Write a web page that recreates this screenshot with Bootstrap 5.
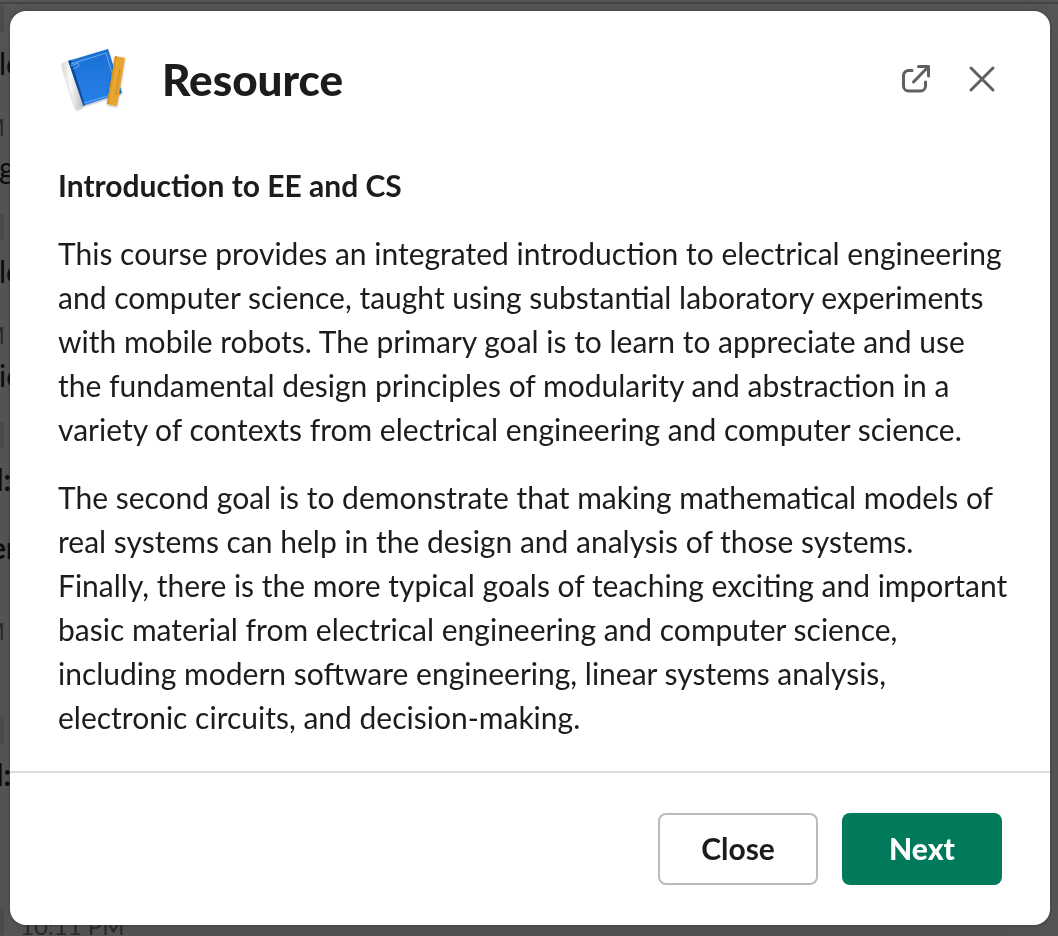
<!DOCTYPE html>
<html lang="en">
<head>
<meta charset="utf-8">
<meta name="viewport" content="width=device-width, initial-scale=1">
<title>Resource</title>
<link href="https://cdn.jsdelivr.net/npm/bootstrap@5.3.0/dist/css/bootstrap.min.css" rel="stylesheet">
<style>
  body { font-family: Lato, sans-serif; color: #1d1c1d; background: #575757; height: 100vh; overflow: hidden; }
  /* dimmed channel behind the dialog */
  .channel { font-size: 30px; line-height: 44px; color: #0c0c0c; border-top: 2px solid #444; margin-top: 2px; white-space: nowrap; }
  .chip { width: 4px; height: 28px; background: #4c4c4c; border-radius: 0 4px 4px 0; }
  .message { text-indent: -1px; }
  .message-bold { text-indent: -4px; font-weight: 700; }
  .sender { text-indent: -10px; font-weight: 700; }
  .stamp { font-size: 24px; line-height: 28px; color: #2b2b2b; }
  .stamp-end { width: 5px; display: flex; justify-content: flex-end; }
  .g1 { margin-top: 1px; } .g4 { margin-top: 4px; } .g8 { margin-top: 8px; } .g24 { margin-top: 24px; }
  .g28 { margin-top: 28px; } .g48 { margin-top: 48px; } .g71 { margin-top: 71px; } .g112 { margin-top: 112px; }
  /* dialog */
  .sheet-frame { padding: 11px 8px 11px 10px; }
  .sheet { border: 0; border-radius: 16px; box-shadow: 0 0 0 2px rgba(29,28,29,.13), 0 8px 32px rgba(0,0,0,.12); color: #1d1c1d; }
  .sheet-head { padding: 36px 48px 0; height: 132px; }
  .sheet-title { font-size: 44px; line-height: 64px; font-weight: 900; margin-left: 32px; }
  .tool { width: 66px; height: 64px; color: #616061; border: 0; padding: 0; background: none; display: flex; align-items: center; justify-content: center; }
  .tools { margin-right: -13px; }
  .sheet-copy { padding: 20px 40px 16px 48px; font-size: 30px; line-height: 44px; }
  .sheet-copy h2 { font-size: 30px; line-height: 44px; font-weight: 700; margin: 0 0 24px; }
  .sheet-copy p { margin: 0 0 24px; }
  .sheet-copy p:last-child { margin: 0; }
  .sheet-foot { border-top: 2px solid #ddd; padding: 40px 48px; gap: 24px; }
  .action { width: 160px; height: 72px; border-radius: 8px; font-size: 30px; line-height: 44px; font-weight: 700; padding: 0 0 2px; }
  .action-plain, .action-plain:hover { background: #fff; border: 2px solid #bbb; color: #1d1c1d; }
  .action-main, .action-main:hover { background: #007a5a; border: 0; color: #fff; font-weight: 900; }
</style>
</head>
<body>
<div class="channel" aria-hidden="true">
  <div class="chip g1"></div>
  <div class="message g8">le</div>
  <div class="stamp stamp-end g28">M</div>
  <div class="message g4">g</div>
  <div class="chip g24"></div>
  <div class="message g8">le</div>
  <div class="stamp stamp-end g28">M</div>
  <div class="message g4">ic</div>
  <div class="chip g24"></div>
  <div class="message-bold g8">l:</div>
  <div class="sender g24">er</div>
  <div class="stamp stamp-end g48">M</div>
  <div class="chip g71"></div>
  <div class="message-bold g8">l:</div>
  <div class="g112 d-flex">
    <div class="chip flex-shrink-0"></div>
    <div class="stamp ms-3 pt-1">10:11 PM</div>
  </div>
</div>

<div class="modal d-block overflow-hidden sheet-frame" role="dialog" aria-labelledby="sheet-title">
  <div class="modal-content sheet h-100">
    <header class="sheet-head d-flex align-items-start">
      <svg width="72" height="72" viewBox="0 0 72 72" aria-hidden="true">
        <defs>
          <linearGradient id="cover" x1="0" y1="0" x2="0" y2="1"><stop offset="0" stop-color="#1d6fd2"/><stop offset="1" stop-color="#2480ea"/></linearGradient>
          <linearGradient id="spine" x1="0" y1="0" x2="1" y2="0"><stop offset="0" stop-color="#d9d9d9"/><stop offset=".4" stop-color="#fafafa"/><stop offset="1" stop-color="#bcbcbc"/></linearGradient>
          <filter id="soft" x="-20%" y="-20%" width="140%" height="140%"><feDropShadow dx="0" dy="1" stdDeviation="1" flood-opacity=".35"/></filter>
        </defs>
        <g filter="url(#soft)">
          <path d="M10 14 50 2 64 46 24 59Z" fill="url(#cover)"/>
          <path d="M10 14 13 13 27 58 24 59Z" fill="#0b4c9f"/>
          <path d="M4 18Q4 15 10 14L25 58Q24 61 18 62Z" fill="url(#spine)"/>
          <path d="M13 17 48 6 60 46 26 56" fill="none" stroke="#6fabf2" stroke-width="1"/>
          <path d="M13 19 20 16 21 19 15 22" fill="none" stroke="#6fabf2" stroke-width="1"/>
        </g>
        <g filter="url(#soft)">
          <path d="M57 9 67 11 59 59 49 57Z" fill="#e8a52e"/>
          <path d="M57 9 59 9 51 57 49 57Z" fill="#d89624"/>
          <path d="M59 15l-6 39" stroke="#efb042" stroke-width="2" stroke-dasharray="1 2"/>
          <path d="M62 22l-4 26" stroke="#a87018" stroke-width="1" stroke-dasharray="1 1"/>
        </g>
      </svg>
      <h1 class="sheet-title mb-0" id="sheet-title">Resource</h1>
      <div class="d-flex ms-auto tools">
        <button type="button" class="tool" aria-label="Open in new window">
          <svg width="32" height="32" viewBox="0 0 32 32" fill="none" stroke="currentColor" stroke-width="3" stroke-linecap="round" stroke-linejoin="round"><path d="M12 7.500H9a5 5 0 0 0-5.500 5V23a5 5 0 0 0 5 5h12a5 5 0 0 0 5-5v-4M18.500 3.500h10V13M28 4 13.500 19"/></svg>
        </button>
        <button type="button" class="tool" aria-label="Close dialog">
          <svg width="32" height="32" viewBox="0 0 32 32" fill="none" stroke="currentColor" stroke-width="3" stroke-linecap="round"><path d="M5 5 27 27M27 5 5 27"/></svg>
        </button>
      </div>
    </header>
    <div class="sheet-copy flex-grow-1">
      <h2>Introduction to EE and CS</h2>
      <p>This course provides an integrated introduction to electrical engineering and computer science, taught using substantial laboratory experiments with mobile robots. The primary goal is to learn to appreciate and use the fundamental design principles of modularity and abstraction in a variety of contexts from electrical engineering and computer science.</p>
      <p>The second goal is to demonstrate that making mathematical models of real systems can help in the design and analysis of those systems. Finally, there is the more typical goals of teaching exciting and important basic material from electrical engineering and computer science, including modern software engineering, linear systems analysis, electronic circuits, and decision-making.</p>
    </div>
    <footer class="sheet-foot d-flex justify-content-end">
      <button type="button" class="btn action action-plain">Close</button>
      <button type="button" class="btn action action-main">Next</button>
    </footer>
  </div>
</div>
<script src="https://cdn.jsdelivr.net/npm/bootstrap@5.3.0/dist/js/bootstrap.bundle.min.js"></script>
</body>
</html>
